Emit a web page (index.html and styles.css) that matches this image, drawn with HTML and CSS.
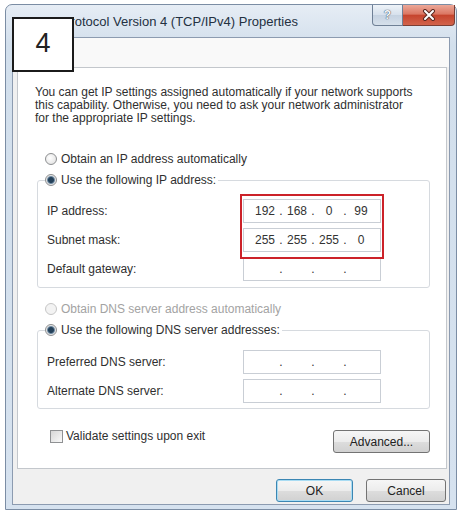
FILE: index.html
```html
<!DOCTYPE html>
<html lang="en">
<head>
  <meta charset="UTF-8">
  <title>Internet Protocol Version 4 (TCP/IPv4) Properties</title>
  <meta name="viewport" content="width=device-width, initial-scale=1">
  <link rel="stylesheet" href="styles.css">
</head>
<body>
  <div class="window">
    <div class="titlebar">
      <span class="title">Internet Protocol Version 4 (TCP/IPv4) Properties</span>
      <div class="caption-buttons">
        <span class="cap-btn help">?</span>
        <span class="cap-btn close">
          <svg width="14" height="12" viewBox="0 0 14 12">
            <path d="M3 2 L11 10 M11 2 L3 10" stroke="#5a2a22" stroke-width="4" stroke-linecap="round"/>
            <path d="M3 2 L11 10 M11 2 L3 10" stroke="#fff" stroke-width="2" stroke-linecap="round"/>
          </svg>
        </span>
      </div>
    </div>

    <div class="client">
      <div class="tabs"></div>
      <div class="page">
        <p class="intro">You can get IP settings assigned automatically if your network supports<br>this capability. Otherwise, you need to ask your network administrator<br>for the appropriate IP settings.</p>

        <label class="radio-row first"><span class="radio"></span>Obtain an IP address automatically</label>

        <fieldset class="group">
          <legend><label class="radio-row"><span class="radio checked"></span>Use the following IP address:</label></legend>
          <div class="marked">
            <div class="field-row">
              <span class="field-label">IP address:</span>
              <div class="ip-box"><span class="oct">192</span><span class="dot">.</span><span class="oct">168</span><span class="dot">.</span><span class="oct">0</span><span class="dot">.</span><span class="oct">99</span></div>
            </div>
            <div class="field-row">
              <span class="field-label">Subnet mask:</span>
              <div class="ip-box"><span class="oct">255</span><span class="dot">.</span><span class="oct">255</span><span class="dot">.</span><span class="oct">255</span><span class="dot">.</span><span class="oct">0</span></div>
            </div>
          </div>
          <div class="field-row">
            <span class="field-label">Default gateway:</span>
            <div class="ip-box"><span class="oct"></span><span class="dot">.</span><span class="oct"></span><span class="dot">.</span><span class="oct"></span><span class="dot">.</span><span class="oct"></span></div>
          </div>
        </fieldset>

        <label class="radio-row disabled"><span class="radio"></span>Obtain DNS server address automatically</label>

        <fieldset class="group dns">
          <legend><label class="radio-row"><span class="radio checked"></span>Use the following DNS server addresses:</label></legend>
          <div class="field-row">
            <span class="field-label">Preferred DNS server:</span>
            <div class="ip-box"><span class="oct"></span><span class="dot">.</span><span class="oct"></span><span class="dot">.</span><span class="oct"></span><span class="dot">.</span><span class="oct"></span></div>
          </div>
          <div class="field-row">
            <span class="field-label">Alternate DNS server:</span>
            <div class="ip-box"><span class="oct"></span><span class="dot">.</span><span class="oct"></span><span class="dot">.</span><span class="oct"></span><span class="dot">.</span><span class="oct"></span></div>
          </div>
        </fieldset>

        <div class="options">
          <label class="check-row"><span class="checkbox"></span>Validate settings upon exit</label>
          <button class="btn advanced">Advanced...</button>
        </div>
      </div>

      <div class="actions">
        <button class="btn default ok">OK</button>
        <button class="btn cancel">Cancel</button>
      </div>
    </div>
  </div>

  <div class="step-badge">4</div>
</body>
</html>
```

FILE: styles.css
```css
body { margin: 0; background: #fff; font-family: "Liberation Sans", Arial, sans-serif; font-size: 12px; color: #2f2f2f; }

/* window frame */
.window {
  width: 450px; height: 504px; margin: 4px 0 0 5px;
  border: 1px solid #7b8da4; border-radius: 7px 7px 0 0;
  background: linear-gradient(#e6edf5, #d2dfec 40px, #d6e2ef);
  display: flex; flex-direction: column;
}
.titlebar { height: 32px; display: flex; align-items: flex-start; }
.title { padding: 10px 0 0 8px; font-size: 13px; line-height: 14px; color: #243142; white-space: nowrap; }
.caption-buttons { margin-left: auto; margin-right: 1px; display: flex; height: 21px; }
.cap-btn { display: flex; align-items: center; justify-content: center; height: 21px; box-sizing: border-box; }
.help {
  width: 31px; border: 1px solid #6f8096; border-top: none; border-radius: 0 0 0 4px;
  background: linear-gradient(#eef3f8, #d6e0ec 50%, #c5d2e1 51%, #d6e0eb);
  color: #f4f7fa; font-weight: bold; font-size: 12px; text-shadow: 0 0 1px #3d4b5c, 0 0 1px #3d4b5c;
}
.close {
  width: 52px; border: 1px solid #7a3e34; border-left: none; border-top: none; border-radius: 0 0 4px 0;
  background: linear-gradient(#eca898, #db7763 45%, #c6452e 52%, #d2634b);
}

.client {
  flex: 1; margin: 0 6px 4px 6px;
  border: 1px solid #8c9bb0; background: #f0f0f0;
  display: flex; flex-direction: column;
}
.tabs { height: 29px; background: #f9f9f9; }
.page {
  height: 402px; box-sizing: border-box; margin: 0 2px 0 4px;
  border: 1px solid #c3c7cc; background: #fff;
  padding: 18px 16px 0 17px;
}
.intro { margin: 0; line-height: 13px; white-space: nowrap; }

/* radios and group boxes */
.radio-row { display: flex; align-items: center; gap: 4px; height: 16px; white-space: nowrap; }
.radio-row.first { margin: 26px 0 0 10px; }
.radio-row.disabled { margin: 13px 0 0 10px; color: #a3a3a3; }
.radio {
  width: 12px; height: 12px; box-sizing: border-box; border-radius: 50%;
  border: 1px solid #8d8f91; background: radial-gradient(circle at 40% 40%, #ffffff, #dcdcdc);
}
.radio.checked { background: radial-gradient(circle, #24415a 0 2.5px, #6f8ba3 3.5px, #e6e6e6 4.5px, #f6f6f6); }
.disabled .radio { border-color: #c6c6c6; background: #f3f3f3; }

.group {
  width: 393px; box-sizing: border-box; margin: 5px 0 0 2px;
  border: 1px solid #d6dadf; border-radius: 3px;
  padding: 8px 0 4px 9px;
}
.group.dns { padding: 9px 0 3px 9px; }
.group legend { padding: 0 2px 0 0; margin-left: -2px; }

.marked { position: relative; }
.marked::after {
  content: ""; position: absolute; left: 193px; top: -2px; bottom: -5px; width: 144px;
  box-sizing: border-box; border: 2px solid #cc2229;
}
.field-row { display: flex; align-items: center; height: 29px; }
.field-label { width: 196px; }
.ip-box {
  width: 138px; height: 24px; box-sizing: border-box; padding-left: 8px;
  border: 1px solid #c9ced5; background: #fff;
  display: flex; align-items: center; color: #333;
}
.oct { width: 26px; text-align: center; }
.dot { width: 6px; text-align: center; }

/* bottom of the page */
.options { margin-top: 21px; display: flex; justify-content: space-between; align-items: flex-start; }
.check-row { display: flex; align-items: center; gap: 3px; margin-left: 15px; line-height: 13px; }
.checkbox {
  width: 13px; height: 13px; box-sizing: border-box; border: 1px solid #8f9193;
  background: linear-gradient(135deg, #d6d6d6, #f9f9f9);
}

.btn {
  height: 23px; box-sizing: border-box; padding: 0;
  border: 1px solid #737373; border-radius: 3px;
  background: linear-gradient(#f6f6f6, #ececec 50%, #dddddd 51%, #d1d1d1);
  font-family: "Liberation Sans", Arial, sans-serif; font-size: 12px; color: #222;
}
.advanced { width: 97px; }
.actions { display: flex; justify-content: flex-end; gap: 13px; padding: 10px 3px 0 0; }
.ok { width: 77px; }
.cancel { width: 80px; }
.btn.default { border-color: #3b86b3; box-shadow: inset 0 0 0 1px #a9dcf3; }

/* screenshot annotation */
.step-badge {
  position: absolute; left: 12px; top: 17px; width: 62px; height: 55px; box-sizing: border-box;
  border: 2px solid #1b1b1b; background: #fff;
  display: flex; align-items: center; justify-content: center; padding-bottom: 3px;
  font-size: 27px; color: #222;
}
```
